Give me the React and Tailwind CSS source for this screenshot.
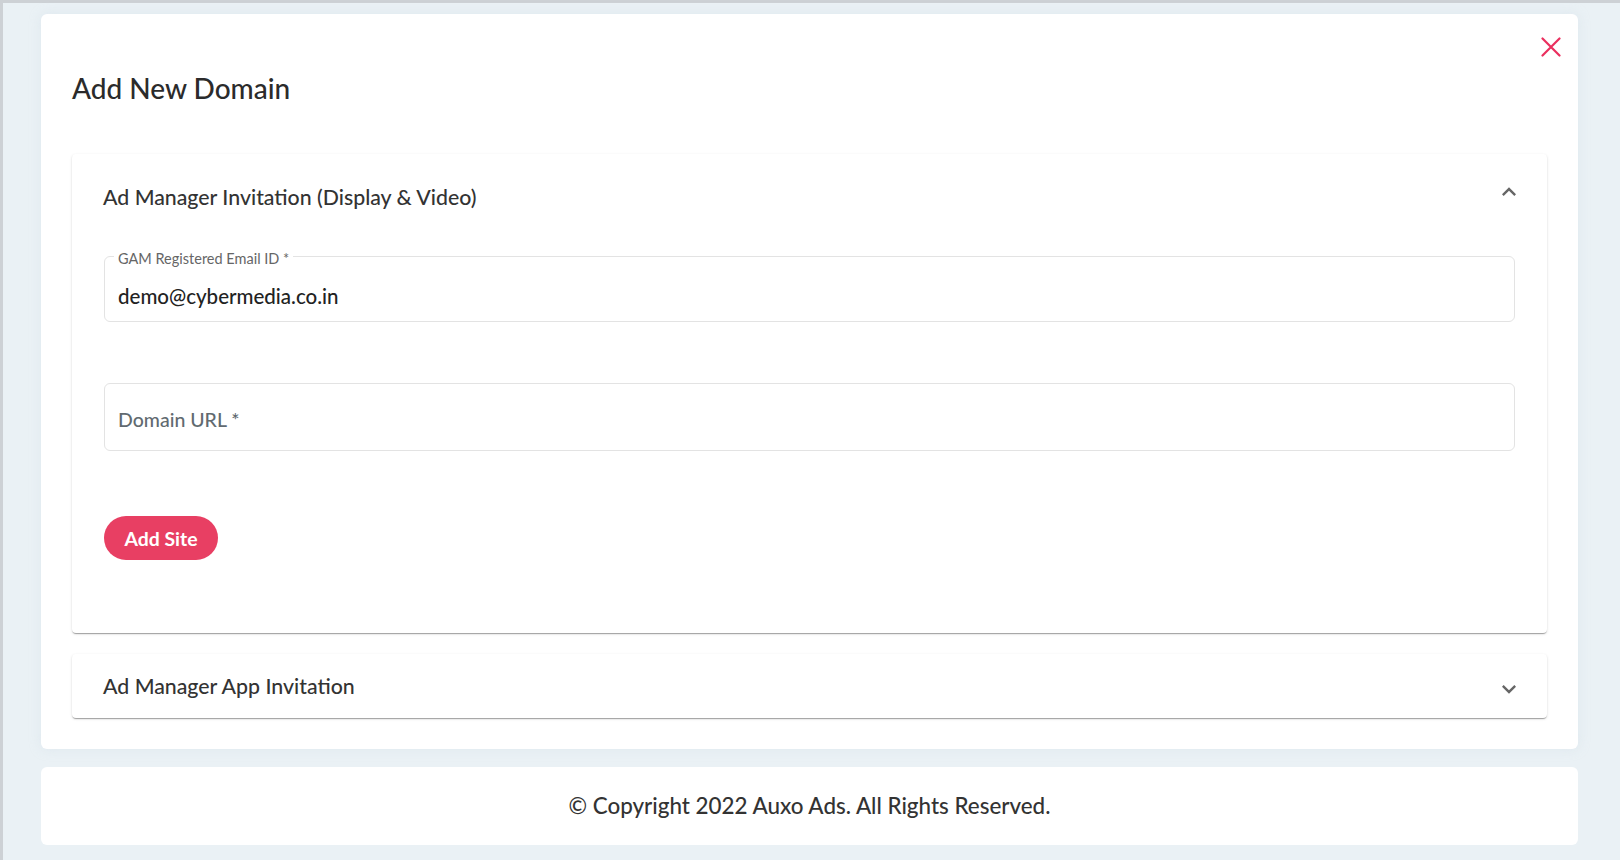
const ExpandIcon = ({ up }) => (
  <svg viewBox="0 0 24 24" className={`w-7 h-7 fill-[#666] ${up ? 'rotate-180' : ''}`}>
    <path d="M16.59 8.59 12 13.17 7.41 8.59 6 10l6 6 6-6z" />
  </svg>
);

const CloseIcon = () => (
  <svg viewBox="0 0 20 20" className="w-5 h-5 stroke-[#ea2f5e]" fill="none" strokeWidth="2.2" strokeLinecap="round">
    <path d="M1.5 1.5 L18.5 18.5 M18.5 1.5 L1.5 18.5" />
  </svg>
);

const accShadow =
  'shadow-[0px_2px_1px_-1px_rgba(0,0,0,0.2),0px_1px_1px_0px_rgba(0,0,0,0.14),0px_1px_3px_0px_rgba(0,0,0,0.12)]';

export default function App() {
  return (
    <div
      className="min-h-[860px] bg-[#eaf1f5] border-t-[3px] border-l-[3px] border-[#cdd1d5] pt-[11px] pl-[38px] pr-[42px] text-[#333]"
      style={{ fontFamily: 'Lato, "Open Sans", sans-serif' }}
    >
      <div className="relative bg-white rounded-[6px] pt-[60px] pb-[31px] px-[31px] shadow-[0_0_12px_rgba(200,215,225,0.35)]">
        <button className="absolute top-[23px] right-[17px]">
          <CloseIcon />
        </button>
        <h2 className="text-[28px] leading-none font-medium text-[#2b2b2b]">Add New Domain</h2>

        <div className="mt-[52px] flex flex-col gap-[21px]">
          <div className={`bg-white rounded-[4px] ${accShadow}`}>
            <div className="flex justify-between items-start pl-[31px] pr-[24px]">
              <h3 className="mt-[33px] text-[21.3px] leading-none font-medium text-[#333]">
                Ad Manager Invitation (Display &amp; Video)
              </h3>
              <div className="mt-[24px]">
                <ExpandIcon up />
              </div>
            </div>
            <div className="px-[32px] pt-[48px] pb-[73px]">
              <div className="relative h-[66px] border border-[#e3e3e3] rounded-[6px] flex items-center pl-[13px] pt-[14px]">
                <span className="absolute -top-[5px] left-[9px] bg-white px-[4px] text-[14.5px] leading-[14px] text-[#666]">
                  GAM Registered Email ID *
                </span>
                <span className="text-[20.5px] font-medium text-[#222]">demo@cybermedia.co.in</span>
              </div>
              <div className="mt-[61px] h-[68px] border border-[#e3e3e3] rounded-[6px] flex items-center pl-[13px] pt-[4px]">
                <span className="text-[19.5px] font-medium text-[#616a70]">Domain URL *</span>
              </div>
              <button className="mt-[65px] w-[114px] h-[44px] rounded-full bg-[#e83f63] text-white font-bold text-[19.4px] flex items-center justify-center">
                Add Site
              </button>
            </div>
          </div>

          <div className={`bg-white rounded-[4px] ${accShadow} h-[64px] flex items-start justify-between pl-[31px] pr-[24px]`}>
            <h3 className="self-center text-[21.3px] leading-none font-medium text-[#333]">Ad Manager App Invitation</h3>
            <div className="mt-[21px]">
              <ExpandIcon />
            </div>
          </div>
        </div>
      </div>

      <div className="mt-[18px] h-[78px] bg-white rounded-[6px] flex items-center justify-center">
        <p className="text-[22.4px] font-medium text-[#333]">© Copyright 2022 Auxo Ads. All Rights Reserved.</p>
      </div>
    </div>
  );
}
